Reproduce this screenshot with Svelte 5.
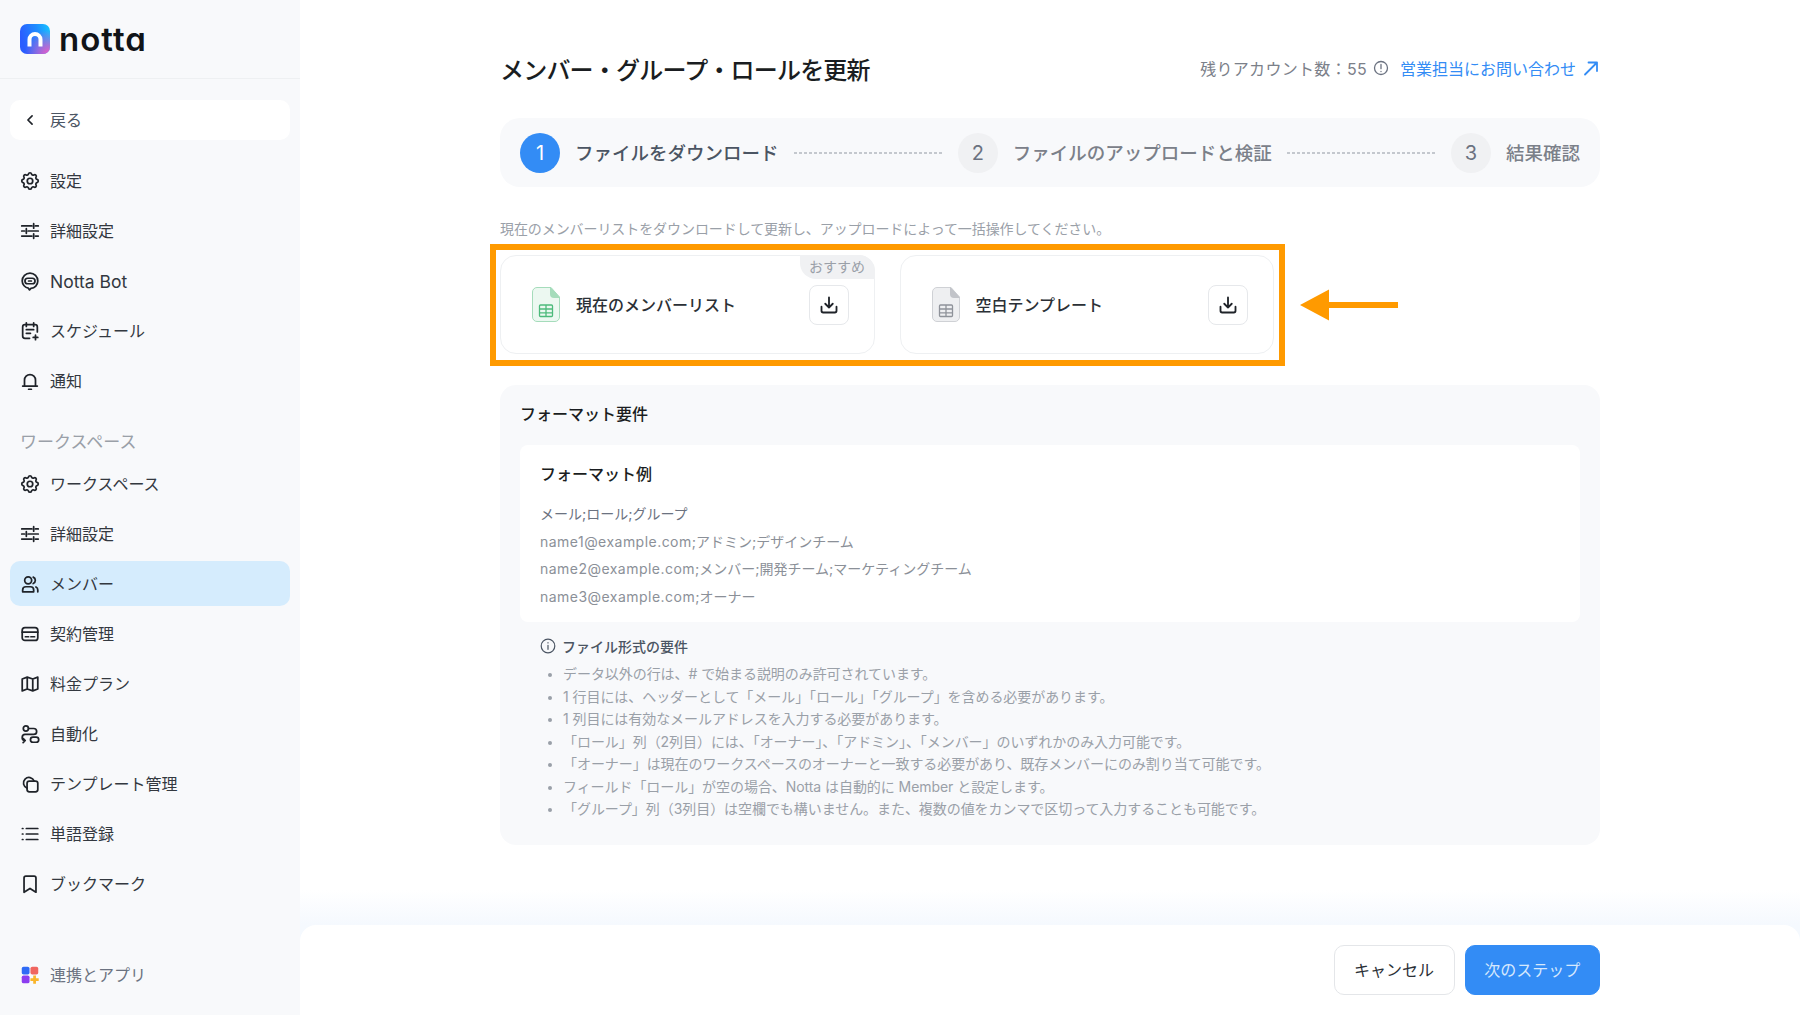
<script>
  const icons = {
    gear: '<path d="M10.325 4.317c.426-1.756 2.924-1.756 3.35 0a1.724 1.724 0 0 0 2.573 1.066c1.543-.94 3.31.826 2.37 2.37a1.724 1.724 0 0 0 1.065 2.572c1.756.426 1.756 2.924 0 3.35a1.724 1.724 0 0 0-1.066 2.573c.94 1.543-.826 3.31-2.37 2.37a1.724 1.724 0 0 0-2.572 1.065c-.426 1.756-2.924 1.756-3.35 0a1.724 1.724 0 0 0-2.573-1.066c-1.543.94-3.31-.826-2.37-2.37a1.724 1.724 0 0 0-1.065-2.572c-1.756-.426-1.756-2.924 0-3.35a1.724 1.724 0 0 0 1.066-2.573c-.94-1.543.826-3.31 2.37-2.37 1 .608 2.296.07 2.572-1.065z"/><circle cx="12" cy="12" r="3"/>',
    sliders: '<path d="M3 6.500h11M18 6.500h3M16 4v5M3 12h3M10 12h11M8 9.500v5M3 17.500h11M18 17.500h3M16 15v5"/>',
    bot: '<path d="M12 3.500a8.500 8.500 0 0 1 8.500 8.500c0 4.300-3.300 7.700-7.500 8l-1.500 1.700-1.300-1.900C6.700 19.200 3.500 16 3.500 12A8.500 8.500 0 0 1 12 3.500z"/><rect x="6.500" y="9" width="11" height="6" rx="3"/><path d="M10.500 12h3"/>',
    calendar: '<path d="M11.500 20H6.500a2.500 2.500 0 0 1-2.500-2.500V7.500A2.500 2.500 0 0 1 6.500 5h11A2.500 2.500 0 0 1 20 7.500V13M8 3v4M16 3v4M8 10.500h8M8 14.500h4.500M18 16.500v5M15.500 19h5"/>',
    bell: '<path d="M6 17.500V11a6 6 0 0 1 12 0v6.500M4 17.500h16M10.500 21h3"/>',
    users: '<circle cx="10" cy="8" r="3.800"/><path d="M4 20.500v-2a3.500 3.500 0 0 1 3.500-3.500h5a3.500 3.500 0 0 1 3.500 3.500v2zM15.500 4.500a3.800 3.800 0 0 1 0 7M20.500 20.500v-2a3.500 3.500 0 0 0-2-3.200"/>',
    card: '<rect x="3.500" y="5" width="17" height="14" rx="3"/><path d="M3.500 10h17M7 15h3.500M13 15h4"/>',
    map: '<path d="M3.500 6.500 9 4.500l6 2 5.500-2v13l-5.500 2-6-2-5.500 2zM9 4.500v13M15 6.500v13"/>',
    flow: '<circle cx="7.500" cy="6" r="2.800"/><rect x="12.500" y="15.500" width="9" height="5.500" rx="2.750"/><path d="M10.500 6h5.500a3.250 3.250 0 0 1 0 6.500H7a3.250 3.250 0 0 0-.500 6.500M4.500 16.800l2.300 2.300-2.300 2.300"/>',
    template: '<path d="M8.800 16.500A6 6 0 1 1 16.500 8.800"/><rect x="8.800" y="8.800" width="11.700" height="11.700" rx="2.500"/>',
    list: '<path d="M8 6h12.500M8 12h12.500M8 18h12.500M3.700 6h.6M3.700 12h.6M3.700 18h.6"/>',
    bookmark: '<path d="M5.500 5.500a2 2 0 0 1 2-2h9a2 2 0 0 1 2 2v15.500L12 16.800 5.500 21z"/>'
  };

  const general = [
    { icon: 'gear', label: '設定' },
    { icon: 'sliders', label: '詳細設定' },
    { icon: 'bot', label: 'Notta Bot', en: true },
    { icon: 'calendar', label: 'スケジュール' },
    { icon: 'bell', label: '通知' }
  ];
  const workspace = [
    { icon: 'gear', label: 'ワークスペース' },
    { icon: 'sliders', label: '詳細設定' },
    { icon: 'users', label: 'メンバー', active: true },
    { icon: 'card', label: '契約管理' },
    { icon: 'map', label: '料金プラン' },
    { icon: 'flow', label: '自動化' },
    { icon: 'template', label: 'テンプレート管理' },
    { icon: 'list', label: '単語登録' },
    { icon: 'bookmark', label: 'ブックマーク' }
  ];
  const samples = [
    { mail: '', rest: 'メール;ロール;グループ' },
    { mail: 'name1@example.com', rest: ';アドミン;デザインチーム' },
    { mail: 'name2@example.com', rest: ';メンバー;開発チーム;マーケティングチーム' },
    { mail: 'name3@example.com', rest: ';オーナー' }
  ];
  const rules = [
    'データ以外の行は、# で始まる説明のみ許可されています。',
    '1 行目には、ヘッダーとして「メール」「ロール」「グループ」を含める必要があります。',
    '1 列目には有効なメールアドレスを入力する必要があります。',
    '「ロール」列（2列目）には、「オーナー」、「アドミン」、「メンバー」のいずれかのみ入力可能です。',
    '「オーナー」は現在のワークスペースのオーナーと一致する必要があり、既存メンバーにのみ割り当て可能です。',
    'フィールド「ロール」が空の場合、Notta は自動的に Member と設定します。',
    '「グループ」列（3列目）は空欄でも構いません。また、複数の値をカンマで区切って入力することも可能です。'
  ];
</script>

{#snippet navItem(item)}
  <a class="nav-item" class:active={item.active} href="#top">
    <svg class="nav-icon" viewBox="0 0 24 24">{@html icons[item.icon]}</svg>
    <span class:en={item.en}>{item.label}</span>
  </a>
{/snippet}

{#snippet downloadBtn()}
  <button class="dl-btn" aria-label="ダウンロード">
    <svg width="20" height="20" viewBox="0 0 24 24" fill="none" stroke="#1f2329" stroke-width="2.200" stroke-linecap="round" stroke-linejoin="round">
      <path d="M12 3v12M7.500 10.500 12 15l4.500-4.500M3 14v5a2 2 0 0 0 2 2h14a2 2 0 0 0 2-2v-5"/>
    </svg>
  </button>
{/snippet}

{#snippet fileIcon(stroke, fill, fold, cell)}
  <svg class="file-icon" width="28" height="35" viewBox="0 0 28 35">
    <path d="M5 .5h14L27.500 10v20a4.500 4.500 0 0 1-4.500 4.500H5A4.500 4.500 0 0 1 .5 30V5A4.500 4.500 0 0 1 5 .5z" fill={fill} stroke={stroke}/>
    <path d="M18 .5h1L27.500 10v1H22a4 4 0 0 1-4-4z" fill={fold}/>
    <g fill="none" stroke={cell} stroke-width="1.300">
      <rect x="7.500" y="18" width="13" height="11.500" rx="1"/>
      <path d="M7.500 22h13M7.500 25.800h13M14 18v11.500"/>
    </g>
  </svg>
{/snippet}

<div class="app">
  <aside class="sidebar">
    <div class="brand">
      <svg width="30" height="30" viewBox="0 0 30 30">
        <defs>
          <linearGradient id="lg-base" x1="0" y1="0.3" x2="1" y2="0">
            <stop offset="0" stop-color="#2a5dff"/>
            <stop offset="0.55" stop-color="#1f8cff"/>
            <stop offset="1" stop-color="#16c8ff"/>
          </linearGradient>
          <radialGradient id="lg-pink" cx="0.95" cy="1" r="0.8">
            <stop offset="0" stop-color="#ee58c6"/>
            <stop offset="1" stop-color="#ee58c6" stop-opacity="0"/>
          </radialGradient>
        </defs>
        <rect width="30" height="30" rx="7" fill="url(#lg-base)"/>
        <rect width="30" height="30" rx="7" fill="url(#lg-pink)"/>
        <path d="M9.500 22.500v-7a5.500 5.500 0 0 1 11 0v7" fill="none" stroke="#fff" stroke-width="4" stroke-linejoin="round"/>
      </svg>
      <span class="wordmark">notta</span>
    </div>

    <a class="back" href="#top">
      <svg width="20" height="20" viewBox="0 0 24 24" fill="none" stroke="#1f2329" stroke-width="2" stroke-linecap="round" stroke-linejoin="round"><path d="M14.500 7 9.500 12l5 5"/></svg>
      <span>戻る</span>
    </a>

    <nav class="nav first">
      {#each general as item}
        {@render navItem(item)}
      {/each}
    </nav>

    <div class="nav-label">ワークスペース</div>

    <nav class="nav">
      {#each workspace as item}
        {@render navItem(item)}
      {/each}
    </nav>

    <a class="nav-item apps" href="#top">
      <svg class="nav-icon colored" viewBox="0 0 24 24">
        <rect x="3" y="3" width="8.500" height="8.500" rx="2" fill="#2f6bf6"/>
        <rect x="12.500" y="3" width="8.500" height="8.500" rx="2" fill="#f0655f"/>
        <rect x="3" y="12.500" width="8.500" height="8.500" rx="2" fill="#8c3df0"/>
        <path d="M15.500 12.500h3v3h3v3h-3v3h-3v-3h-3v-3h3z" fill="#f9b52b"/>
      </svg>
      <span>連携とアプリ</span>
    </a>
  </aside>

  <div class="main">
    <div class="content">
      <header class="head">
        <h1>メンバー・グループ・ロールを更新</h1>
        <div class="head-right">
          <span class="remain">残りアカウント数：55</span>
          <svg width="16" height="16" viewBox="0 0 16 16" fill="none" stroke="#6b7280" stroke-width="1.300" stroke-linecap="round"><circle cx="8" cy="8" r="6.500"/><path d="M8 4.500v4.200M8 11.300v.2"/></svg>
          <a class="sales" href="#top">営業担当にお問い合わせ</a>
          <svg width="18" height="18" viewBox="0 0 18 18" fill="none" stroke="#338cf5" stroke-width="1.800" stroke-linecap="round" stroke-linejoin="round"><path d="M3 15.500 15 3.500M6.500 3.500H15V12"/></svg>
        </div>
      </header>

      <div class="stepper">
        <span class="circle on">1</span>
        <span class="step-text on">ファイルをダウンロード</span>
        <span class="dots"></span>
        <span class="circle">2</span>
        <span class="step-text">ファイルのアップロードと検証</span>
        <span class="dots"></span>
        <span class="circle">3</span>
        <span class="step-text">結果確認</span>
      </div>

      <p class="desc">現在のメンバーリストをダウンロードして更新し、アップロードによって一括操作してください。</p>

      <div class="cards">
        <div class="card">
          <span class="badge">おすすめ</span>
          {@render fileIcon('#a5dcbb', '#ecf8f1', '#a5dcbb', '#4dba7c')}
          <span class="card-title">現在のメンバーリスト</span>
          {@render downloadBtn()}
        </div>
        <div class="card">
          {@render fileIcon('#cfd1d5', '#eeeff1', '#c2c4c9', '#8f939a')}
          <span class="card-title">空白テンプレート</span>
          {@render downloadBtn()}
        </div>
        <div class="highlight"></div>
        <svg class="arrow" width="98" height="32" viewBox="0 0 98 32">
          <path d="M0 16 29 .5V13h69v6H29v12.500z" fill="#ff9a00"/>
        </svg>
      </div>

      <section class="format">
        <h2>フォーマット要件</h2>
        <div class="example">
          <h3>フォーマット例</h3>
          {#each samples as line, i}
            <div class="sample" class:lead={i === 0}><span class="mail">{line.mail}</span>{line.rest}</div>
          {/each}
        </div>
        <div class="reqs">
          <div class="reqs-title">
            <svg width="16" height="16" viewBox="0 0 16 16" fill="none" stroke="#4b5563" stroke-width="1.200" stroke-linecap="round"><circle cx="8" cy="8" r="6.800"/><path d="M8 7.300v4M8 4.700v.2"/></svg>
            <span>ファイル形式の要件</span>
          </div>
          <ul>
            {#each rules as rule}
              <li>{rule}</li>
            {/each}
          </ul>
        </div>
      </section>
    </div>

    <footer class="foot">
      <div class="foot-inner">
        <button class="btn">キャンセル</button>
        <button class="btn primary">次のステップ</button>
      </div>
    </footer>
  </div>
</div>

<style>
  :global(body) {
    margin: 0;
    background: #fff;
  }

  .app {
    display: flex;
    height: 100vh;
    overflow: hidden;
    font-family: Inter, "Noto Sans CJK JP", sans-serif;
    color: #1f2329;
  }

  /* sidebar */
  .sidebar {
    width: 300px;
    flex: none;
    display: flex;
    flex-direction: column;
    background: #f8f9fb;
  }
  .brand {
    height: 79px;
    box-sizing: border-box;
    padding: 0 0 0 20px;
    display: flex;
    align-items: center;
    gap: 9px;
    border-bottom: 1px solid #eef0f2;
  }
  .wordmark {
    font-size: 33px;
    font-weight: 600;
    letter-spacing: 1px;
    color: #111418;
    font-feature-settings: "cv11";
    line-height: 1;
  }
  .back {
    margin: 21px 10px 0;
    height: 40px;
    padding-left: 10px;
    display: flex;
    align-items: center;
    gap: 10px;
    background: #fff;
    border-radius: 10px;
    font-size: 16px;
    color: #4b5563;
    text-decoration: none;
  }
  .back span,
  .nav-item span,
  .step-text,
  .card-title {
    margin-top: -2px;
  }
  .nav {
    display: flex;
    flex-direction: column;
    gap: 5px;
    padding: 0 10px;
  }
  .nav.first {
    margin-top: 18px;
  }
  .nav-item {
    height: 45px;
    padding-left: 9px;
    display: flex;
    align-items: center;
    gap: 9px;
    border-radius: 10px;
    font-size: 16px;
    color: #33383f;
    text-decoration: none;
  }
  .nav-item.active {
    background: #d5ecfd;
  }
  .nav-item .en {
    margin-top: 1px;
    font-size: 17.500px;
  }
  .nav-icon {
    width: 22px;
    height: 22px;
    flex: none;
    fill: none;
    stroke: #1f2329;
    stroke-width: 1.900;
    stroke-linecap: round;
    stroke-linejoin: round;
  }
  .nav-icon.colored {
    stroke: none;
  }
  .nav-label {
    margin: 25px 0 5px 20px;
    height: 28px;
    line-height: 28px;
    font-size: 17px;
    color: #9aa0a8;
  }
  .apps {
    margin: auto 10px 0;
    position: relative;
    top: -18px;
    color: #6b7280;
  }

  /* main column */
  .main {
    flex: 1;
    min-width: 0;
    display: flex;
    flex-direction: column;
  }
  .content {
    flex: 1;
    width: 1100px;
    margin: 0 auto;
  }
  .head {
    height: 34px;
    margin-top: 51px;
    display: flex;
    align-items: center;
    justify-content: space-between;
  }
  h1 {
    margin: 0;
    font-size: 24px;
    font-weight: 500;
    letter-spacing: -0.800px;
    color: #1a1d21;
  }
  .head-right {
    display: flex;
    align-items: center;
    gap: 6px;
    font-size: 16px;
  }
  .remain {
    color: #7b8089;
    letter-spacing: 0.300px;
  }
  .sales {
    margin-left: 5px;
    color: #338cf5;
    text-decoration: none;
  }

  .stepper {
    margin-top: 33px;
    height: 69px;
    box-sizing: border-box;
    padding: 0 20px;
    display: flex;
    align-items: center;
    background: #f8f9fb;
    border-radius: 20px;
  }
  .circle {
    width: 40px;
    height: 40px;
    flex: none;
    display: flex;
    align-items: center;
    justify-content: center;
    border-radius: 50%;
    background: #f0f1f3;
    color: #6b7280;
    font-size: 20px;
  }
  .circle.on {
    background: #338cf5;
    color: #fff;
  }
  .step-text {
    margin-left: 15px;
    font-size: 18.500px;
    font-weight: 500;
    color: #7b8089;
    white-space: nowrap;
  }
  .step-text.on {
    color: #4b5563;
  }
  .dots {
    flex: 1;
    height: 2px;
    margin: 0 15px;
    background: repeating-linear-gradient(90deg, #c4c8ce 0 3px, transparent 3px 5px);
  }

  .desc {
    margin: 31px 0 0;
    height: 22px;
    line-height: 22px;
    font-size: 14px;
    letter-spacing: -0.080px;
    color: #9aa0a8;
  }

  .cards {
    position: relative;
    margin-top: 15px;
    display: flex;
    gap: 25px;
    width: 774px;
  }
  .card {
    position: relative;
    width: 375px;
    height: 99px;
    box-sizing: border-box;
    padding: 0 25px 0 31px;
    display: flex;
    align-items: center;
    border: 1px solid #eef0f2;
    border-radius: 16px;
    background: #fff;
  }
  .card-title {
    flex: 1;
    margin-left: 16px;
    font-size: 16px;
    font-weight: 500;
    color: #2b3036;
  }
  .file-icon {
    flex: none;
  }
  .badge {
    position: absolute;
    top: -1px;
    right: -1px;
    height: 24px;
    width: 75px;
    line-height: 24px;
    text-align: center;
    font-size: 14px;
    color: #9aa0a8;
    background: #f0f1f3;
    border-radius: 0 16px 0 16px;
  }
  .dl-btn {
    width: 40px;
    height: 40px;
    padding: 0;
    display: flex;
    align-items: center;
    justify-content: center;
    background: #fff;
    border: 1px solid #e6e8eb;
    border-radius: 8px;
  }
  .highlight {
    position: absolute;
    left: -10px;
    top: -11px;
    width: 795px;
    height: 122px;
    box-sizing: border-box;
    border: 6px solid #ff9a00;
    pointer-events: none;
  }
  .arrow {
    position: absolute;
    left: 800px;
    top: 34px;
  }

  .format {
    margin-top: 31px;
    height: 460px;
    box-sizing: border-box;
    padding: 15px 20px 0;
    background: #f8f9fb;
    border-radius: 16px;
  }
  h2 {
    margin: 0;
    height: 28px;
    line-height: 28px;
    font-size: 16px;
    font-weight: 500;
    color: #1a1d21;
  }
  .example {
    margin-top: 17px;
    height: 177px;
    box-sizing: border-box;
    padding: 15px 20px 0;
    background: #fff;
    border-radius: 8px;
  }
  h3 {
    margin: 0 0 12px;
    height: 28px;
    line-height: 28px;
    font-size: 16px;
    font-weight: 500;
    color: #1a1d21;
  }
  .sample {
    height: 27.500px;
    line-height: 27.500px;
    font-size: 14px;
    color: #8b9098;
  }
  .sample.lead {
    color: #6b7280;
  }
  .mail {
    letter-spacing: 0.470px;
  }
  .reqs {
    padding: 12px 0 0 20px;
  }
  .reqs-title {
    display: flex;
    align-items: center;
    gap: 6px;
    height: 24px;
    font-size: 14px;
    font-weight: 500;
    color: #4b5563;
  }
  ul {
    margin: 5px 0 0;
    padding: 0 0 0 23px;
  }
  li {
    height: 22.500px;
    line-height: 22.500px;
    font-size: 14px;
    letter-spacing: -0.060px;
    color: #9aa0a8;
    white-space: nowrap;
  }
  li::marker {
    font-size: 12px;
  }

  /* footer */
  .foot {
    height: 125px;
    flex: none;
    display: flex;
    flex-direction: column;
    justify-content: flex-end;
    background: linear-gradient(180deg, #fff 0, #f5f9fe 35px);
  }
  .foot-inner {
    height: 90px;
    box-sizing: border-box;
    padding: 20px 200px 0 0;
    display: flex;
    justify-content: flex-end;
    gap: 10px;
    background: #fff;
    border-radius: 16px 16px 0 0;
  }
  .btn {
    width: 121px;
    height: 50px;
    padding: 0 0 2px;
    font: inherit;
    font-size: 16px;
    color: #2b3036;
    background: #fff;
    border: 1px solid #e4e6e9;
    border-radius: 10px;
  }
  .btn.primary {
    width: 135.500px;
    background: #338cf5;
    border-color: #338cf5;
    color: #d6e8fd;
  }
</style>
